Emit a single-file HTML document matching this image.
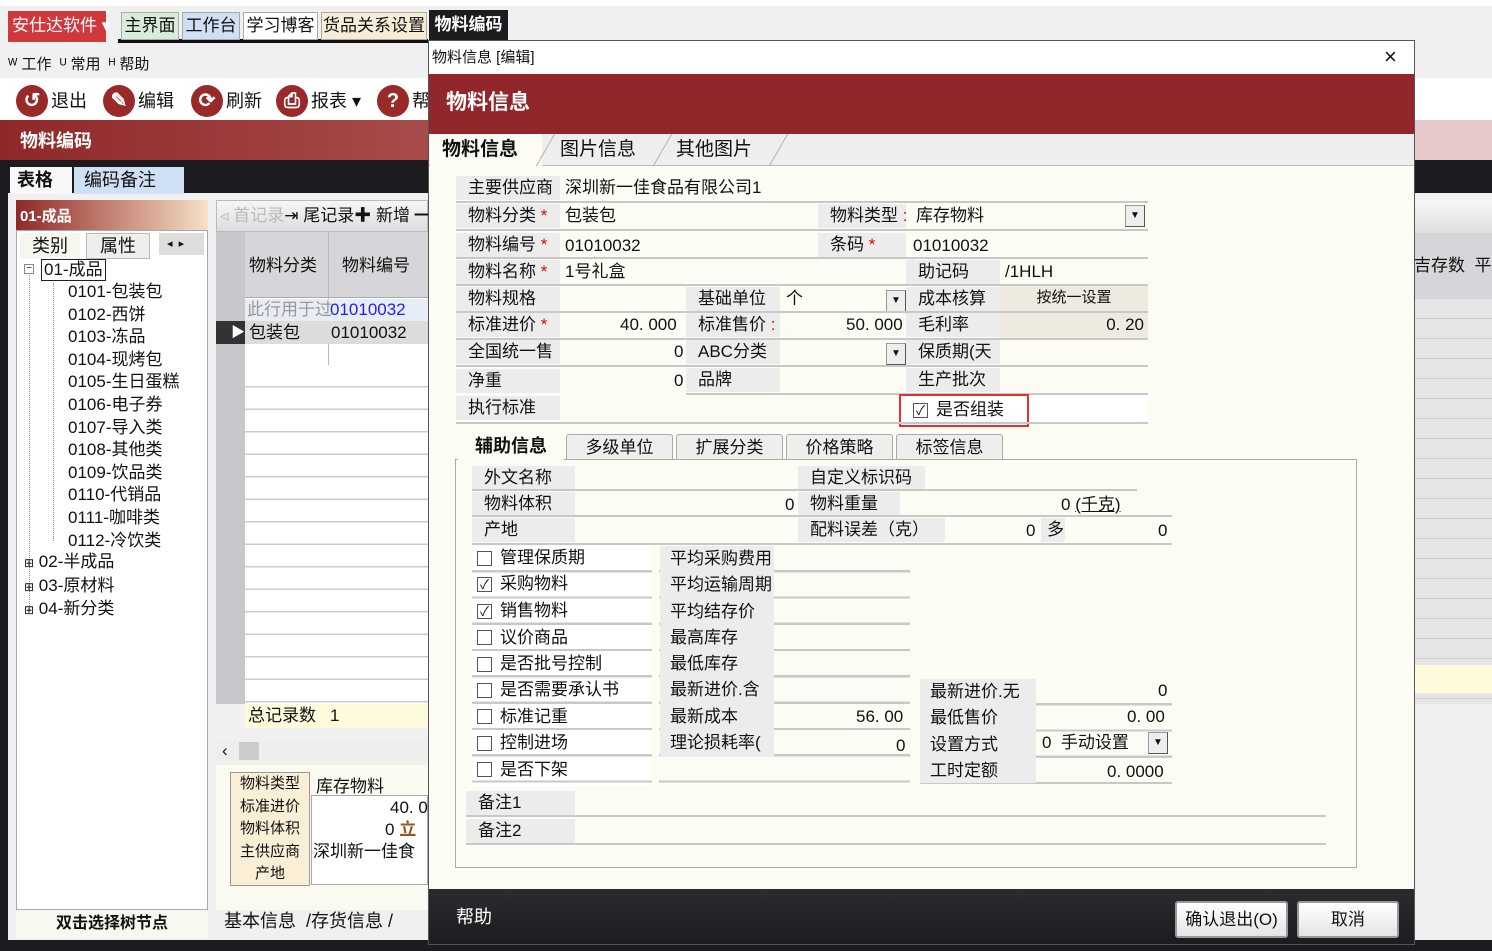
<!DOCTYPE html>
<html><head><meta charset="utf-8">
<style>
*{margin:0;padding:0;box-sizing:border-box}
body{width:1492px;height:951px;overflow:hidden;position:relative;background:#f0f0f0;font-family:"Liberation Sans","Noto Sans CJK SC",sans-serif;font-size:17px;color:#111}
div,span{position:absolute;white-space:nowrap}
.t{line-height:24px}
.lb{background:#ececec;line-height:24px;padding-left:12px}
.hl{height:2px;background:#c8c8c8}
.dd{width:20px;height:22px;background:#eee;border:1px solid #999;border-right-color:#555;border-bottom-color:#555;font-size:10px;text-align:center;line-height:20px}
.cb{width:15px;height:15px;border:1px solid #555;background:#fff;font-size:13px;line-height:13px;text-align:center}
.r{color:#e00}
.ic{width:32px;height:32px;border-radius:50%;background:#9a2a2a;color:#fff;text-align:center;line-height:32px;font-size:20px;font-weight:bold}
.tab{height:34px;border:1px solid #aaa;border-bottom:none;background:#eee;line-height:32px;text-align:center;font-size:17px;border-radius:3px 3px 0 0}
</style></head><body>
<!-- top bar -->
<div style="left:0;top:0;width:1492px;height:6px;background:#fff"></div>
<div style="left:8px;top:11px;width:98px;height:31px;background:#d0393c;color:#fff;line-height:30px;padding-left:4px;font-size:17px">安仕达软件 ▾</div>
<div style="left:118px;top:39px;width:310px;height:4px;background:#111"></div>
<div style="left:121px;top:12px;width:58px;height:28px;background:#d9ecdc;border:1px solid #aaa;text-align:center;line-height:26px">主界面</div>
<div style="left:182px;top:12px;width:58px;height:28px;background:#cfe0f4;border:1px solid #aaa;text-align:center;line-height:26px">工作台</div>
<div style="left:243px;top:12px;width:75px;height:28px;background:#fff;border:1px solid #aaa;text-align:center;line-height:26px">学习博客</div>
<div style="left:321px;top:12px;width:106px;height:28px;background:#f7ecd6;border:1px solid #aaa;text-align:center;line-height:26px">货品关系设置</div>
<div style="left:429px;top:10px;width:79px;height:32px;background:#1c1c20;color:#fff;text-align:center;line-height:30px;font-weight:bold">物料编码</div>
<div class="t" style="left:8px;top:53px;font-size:15px">ᵂ 工作 &nbsp;ᵁ 常用 &nbsp;ᴴ 帮助</div>
<div style="left:0;top:78px;width:1492px;height:42px;background:#fff"></div>
<div class="ic" style="left:16px;top:85px">↺</div><div class="t" style="left:51px;top:89px;font-size:18px">退出</div>
<div class="ic" style="left:103px;top:85px">✎</div><div class="t" style="left:138px;top:89px;font-size:18px">编辑</div>
<div class="ic" style="left:191px;top:85px">⟳</div><div class="t" style="left:226px;top:89px;font-size:18px">刷新</div>
<div class="ic" style="left:276px;top:85px">⎙</div><div class="t" style="left:311px;top:89px;font-size:18px">报表 ▾</div>
<div class="ic" style="left:377px;top:85px">?</div><div class="t" style="left:412px;top:89px;font-size:18px">帮</div>
<div style="left:0;top:120px;width:1492px;height:40px;background:linear-gradient(90deg,#8f2828,#b05a5a 40%,#e4c6c8 80%,#e6c8ca)"></div>
<div class="t" style="left:20px;top:129px;color:#fff;font-weight:bold;font-size:18px">物料编码</div>
<div style="left:0;top:160px;width:1492px;height:33px;background:#1c1c20"></div>
<div style="left:10px;top:167px;width:62px;height:27px;background:#f8f8f8;font-weight:bold;line-height:26px;padding-left:7px;font-size:18px">表格</div>
<div style="left:74px;top:167px;width:110px;height:27px;background:#cfe0f4;line-height:26px;padding-left:10px;font-size:18px">编码备注</div>
<div style="left:0;top:193px;width:8px;height:758px;background:#1c1c20"></div>
<div style="left:0;top:940px;width:1492px;height:11px;background:#1c1c20"></div>
<!-- left panel -->
<div style="left:16px;top:200px;width:192px;height:30px;background:linear-gradient(90deg,#8f2828,#d9a894 70%,#f5e2c8);color:#fff;font-weight:bold;font-size:15px;line-height:34px;padding-left:4px">01-成品</div>
<div style="left:16px;top:230px;width:192px;height:680px;background:#fff;border:1px solid #aaa"></div>
<div style="left:20px;top:233px;width:60px;height:26px;background:#f6f6ee;text-align:center;line-height:26px;font-size:18px">类别</div>
<div style="left:86px;top:233px;width:64px;height:26px;background:#eee;border:1px solid #bbb;text-align:center;line-height:24px;font-size:18px">属性</div>
<div style="left:159px;top:233px;width:45px;height:22px;background:#ddd;font-size:11px;line-height:22px;padding-left:8px">◂ &nbsp;▸</div>
<div style="left:24px;top:264px;width:10px;height:10px;border:1px solid #888;font-size:10px;line-height:8px;text-align:center">−</div>
<div class="t" style="left:41px;top:259px;border:1px solid #222;padding:0 2px;line-height:20px">01-成品</div>
<div style="left:29px;top:275px;height:335px;border-left:1px dotted #999"></div>
<div style="left:53px;top:283px;height:258px;border-left:1px dotted #999"></div>
<div class="t" style="left:68px;top:281px;line-height:22.6px">0101-包装包<br>0102-西饼<br>0103-冻品<br>0104-现烤包<br>0105-生日蛋糕<br>0106-电子券<br>0107-导入类<br>0108-其他类<br>0109-饮品类<br>0110-代销品<br>0111-咖啡类<br>0112-冷饮类</div>
<div class="t" style="left:24px;top:551px;line-height:22.6px"><span style="position:static;font-size:12px">⊞</span> 02-半成品<br><span style="position:static;font-size:12px">⊞</span> 03-原材料<br><span style="position:static;font-size:12px">⊞</span> 04-新分类</div>
<div style="left:16px;top:910px;width:192px;height:28px;background:#f8f8f0;text-align:center;font-weight:bold;font-size:16px;line-height:28px">双击选择树节点</div>
<!-- grid -->
<div style="left:216px;top:200px;width:212px;height:32px;background:linear-gradient(#f6f6f6,#ddd);border:1px solid #bbb"></div>
<div class="t" style="left:220px;top:204px"><span style="position:static;color:#bbb">◃ 首记录</span>⇥ 尾记录✚ 新增 ━</div>
<div style="left:216px;top:232px;width:212px;height:472px;background:#fff"></div>
<div style="left:216px;top:232px;width:29px;height:472px;background:#c8c8cc"></div>
<div style="left:245px;top:232px;width:183px;height:66px;background:#d6d6da;border-bottom:1px solid #aaa"></div>
<div style="left:328px;top:232px;width:1px;height:472px;background:#bbb"></div>
<div class="t" style="left:249px;top:254px">物料分类</div><div class="t" style="left:342px;top:254px">物料编号</div>
<div style="left:245px;top:299px;width:183px;height:22px;background:#e8ecf4"></div>
<div class="t" style="left:247px;top:298px;color:#999">此行用于过</div><div class="t" style="left:330px;top:298px;color:#22e">01010032</div>
<div style="left:216px;top:321px;width:29px;height:23px;background:#333;color:#fff;font-size:14px;line-height:23px;padding-left:15px">▶</div>
<div style="left:245px;top:321px;width:183px;height:23px;background:#dcdcdc"></div>
<div class="t" style="left:249px;top:321px">包装包</div><div class="t" style="left:331px;top:321px">01010032</div>
<div style="left:245px;top:365px;width:183px;height:340px;background:repeating-linear-gradient(#fff 0 21px,#ccc 21px 22.5px)"></div>
<div style="left:245px;top:704px;width:183px;height:24px;background:#fdfbdc"></div>
<div class="t" style="left:248px;top:704px">总记录数</div><div class="t" style="left:330px;top:704px">1</div>
<div style="left:216px;top:740px;width:212px;height:22px;background:#eee;padding-left:6px;line-height:22px">‹</div>
<div style="left:239px;top:742px;width:20px;height:18px;background:#ccc"></div>
<div style="left:216px;top:765px;width:212px;height:145px;background:#fafaf0"></div>
<div style="left:230px;top:772px;width:80px;height:114px;background:#fbeed6;border:1px solid #999;font-size:15px;line-height:22.6px;text-align:center;white-space:normal">物料类型 标准进价 物料体积 主供应商 产地</div>
<div class="t" style="left:316px;top:775px">库存物料</div>
<div style="left:311px;top:795px;width:117px;height:90px;background:#fff;border:1px solid #aaa"></div>
<div class="t" style="left:390px;top:796px">40. 0</div><div class="t" style="left:385px;top:818px">0 <b style="position:static;color:#952">立</b></div>
<div class="t" style="left:313px;top:840px">深圳新一佳食</div>
<div class="t" style="left:224px;top:909px;font-size:18px">基本信息 &nbsp;/存货信息 /</div>
<!-- right background -->
<div style="left:1414px;top:200px;width:78px;height:35px;background:linear-gradient(#f6f6f6,#ddd)"></div>
<div style="left:1414px;top:233px;width:78px;height:66px;background:#d6d6da"></div>
<div class="t" style="left:1414px;top:254px">吉存数 &nbsp;平</div>
<div style="left:1414px;top:299px;width:78px;height:405px;background:repeating-linear-gradient(#e6e6e6 0 19px,#ccc 19px 20px)"></div>
<div style="left:1414px;top:665px;width:78px;height:28px;background:#fdfbdc"></div>
<!-- dialog -->
<div style="left:428px;top:40px;width:987px;height:905px;background:#fcfcf4;border:1px solid #555"></div>
<div style="left:429px;top:41px;width:985px;height:33px;background:#fff"></div>
<div class="t" style="left:432px;top:46px;font-size:15px">物料信息 [编辑]</div>
<div class="t" style="left:1384px;top:45px;font-size:22px">×</div>
<div style="left:429px;top:74px;width:985px;height:60px;background:#91272a"></div>
<div class="t" style="left:446px;top:91px;color:#fff;font-weight:bold;font-size:21px">物料信息</div>
<div style="left:429px;top:134px;width:985px;height:32px;background:#eee;border-bottom:1px solid #bbb"></div>
<div style="left:430px;top:134px;width:112px;height:33px;background:#fcfcf4;font-weight:bold;font-size:19px;line-height:32px;padding-left:12px">物料信息</div>
<div class="t" style="left:560px;top:138px;font-size:19px">图片信息</div>
<div class="t" style="left:676px;top:138px;font-size:19px">其他图片</div>
<div style="left:545px;top:134px;width:1px;height:32px;background:#aaa;transform:skewX(-30deg)"></div>
<div style="left:662px;top:134px;width:1px;height:32px;background:#aaa;transform:skewX(-30deg)"></div>
<div style="left:778px;top:134px;width:1px;height:32px;background:#aaa;transform:skewX(-30deg)"></div>

<!-- main form rows -->
<div class="lb" style="left:456px;top:176px;width:104px">主要供应商</div><div class="t" style="left:565px;top:176px">深圳新一佳食品有限公司1</div>
<div class="hl" style="left:456px;top:201px;width:692px"></div>
<div class="lb" style="left:456px;top:204px;width:104px">物料分类 <span class="r" style="position:static">*</span></div><div class="t" style="left:565px;top:204px">包装包</div>
<div class="lb" style="left:818px;top:204px;width:88px">物料类型 <span class="r" style="position:static">:</span></div><div class="t" style="left:916px;top:204px">库存物料</div>
<div class="dd" style="left:1125px;top:205px">▼</div>
<div class="hl" style="left:456px;top:229px;width:692px"></div>
<div class="lb" style="left:456px;top:233px;width:104px">物料编号 <span class="r" style="position:static">*</span></div><div class="t" style="left:565px;top:234px">01010032</div>
<div class="lb" style="left:818px;top:233px;width:88px">条码 <span class="r" style="position:static">*</span></div><div class="t" style="left:913px;top:234px">01010032</div>
<div class="hl" style="left:456px;top:257px;width:692px"></div>
<div class="lb" style="left:456px;top:260px;width:104px">物料名称 <span class="r" style="position:static">*</span></div><div class="t" style="left:565px;top:260px">1号礼盒</div>
<div class="lb" style="left:906px;top:260px;width:94px">助记码</div><div class="t" style="left:1005px;top:260px">/1HLH</div>
<div class="hl" style="left:456px;top:284px;width:692px"></div>
<div class="lb" style="left:456px;top:287px;width:104px">物料规格</div>
<div class="lb" style="left:686px;top:287px;width:94px">基础单位</div><div class="t" style="left:786px;top:287px">个</div><div class="dd" style="left:886px;top:290px">▼</div>
<div class="lb" style="left:906px;top:287px;width:94px">成本核算</div>
<div style="left:1000px;top:286px;width:148px;height:25px;background:#eeeadf;text-align:center;line-height:24px;font-size:15px">按统一设置</div>
<div class="hl" style="left:456px;top:311px;width:692px"></div>
<div class="lb" style="left:456px;top:313px;width:104px">标准进价 <span class="r" style="position:static">*</span></div><div class="t" style="left:620px;top:313px">40. 000</div>
<div class="lb" style="left:686px;top:313px;width:94px">标准售价 <span class="r" style="position:static">:</span></div><div class="t" style="left:846px;top:313px">50. 000</div>
<div class="lb" style="left:906px;top:313px;width:94px">毛利率</div>
<div style="left:1000px;top:313px;width:148px;height:25px;background:#eeeadf;text-align:right;line-height:24px;padding-right:4px">0. 20</div>
<div class="hl" style="left:456px;top:338px;width:692px"></div>
<div class="lb" style="left:456px;top:340px;width:104px">全国统一售</div><div class="t" style="left:674px;top:340px">0</div>
<div class="lb" style="left:686px;top:340px;width:94px">ABC分类</div><div class="dd" style="left:886px;top:343px">▼</div>
<div class="lb" style="left:906px;top:340px;width:94px">保质期(天</div>
<div class="hl" style="left:456px;top:365px;width:692px"></div>
<div class="lb" style="left:456px;top:369px;width:104px">净重</div><div class="t" style="left:674px;top:369px">0</div>
<div class="lb" style="left:686px;top:368px;width:94px">品牌</div>
<div class="lb" style="left:906px;top:368px;width:94px">生产批次</div>
<div class="hl" style="left:686px;top:393px;width:462px"></div>
<div class="lb" style="left:456px;top:396px;width:104px">执行标准</div>
<div style="left:900px;top:395px;width:248px;height:28px;background:#fff"></div>
<div style="left:899px;top:394px;width:130px;height:33px;border:2px solid #e53030"></div>
<div class="cb" style="left:913px;top:403px">✓</div><div class="t" style="left:936px;top:398px">是否组装</div>
<div class="hl" style="left:456px;top:422px;width:692px"></div>

<!-- sub tabs -->
<div style="left:455px;top:459px;width:902px;height:409px;border:1px solid #aaa"></div>
<div class="tab" style="left:458px;top:432px;width:106px;background:#fcfcf4;font-weight:bold;font-size:18px;height:28px;line-height:28px;border:none">辅助信息</div>
<div class="tab" style="left:566px;top:434px;width:107px;height:25px;line-height:25px">多级单位</div>
<div class="tab" style="left:676px;top:434px;width:107px;height:25px;line-height:25px">扩展分类</div>
<div class="tab" style="left:786px;top:434px;width:107px;height:25px;line-height:25px">价格策略</div>
<div class="tab" style="left:896px;top:434px;width:107px;height:25px;line-height:25px">标签信息</div>

<div class="lb" style="left:472px;top:466px;width:103px">外文名称</div>
<div class="lb" style="left:798px;top:466px;width:127px">自定义标识码</div>
<div class="hl" style="left:472px;top:489px;width:665px"></div>
<div class="lb" style="left:472px;top:492px;width:103px">物料体积</div><div class="t" style="left:785px;top:493px">0</div>
<div class="lb" style="left:798px;top:492px;width:102px">物料重量</div><div class="t" style="left:1061px;top:493px">0 <u style="position:static">(千克)</u></div>
<div class="hl" style="left:472px;top:515px;width:700px"></div>
<div class="lb" style="left:472px;top:518px;width:103px">产地</div>
<div class="lb" style="left:798px;top:518px;width:147px;background:#ececec">配料误差（克）</div><div class="t" style="left:1026px;top:519px">0</div>
<div class="lb" style="left:1041px;top:518px;width:24px;padding-left:6px">多</div><div class="t" style="left:1158px;top:519px">0</div>
<div class="hl" style="left:472px;top:543px;width:700px"></div>

<div style="left:472px;top:546px;width:180px;height:240px;background:repeating-linear-gradient(#fff 0 24px,#c8c8c8 24px 26.3px)"></div>
<div class="cb" style="left:477px;top:551px"></div><div class="t" style="left:500px;top:546px">管理保质期</div>
<div class="cb" style="left:477px;top:577px">✓</div><div class="t" style="left:500px;top:572px">采购物料</div>
<div class="cb" style="left:477px;top:604px">✓</div><div class="t" style="left:500px;top:599px">销售物料</div>
<div class="cb" style="left:477px;top:630px"></div><div class="t" style="left:500px;top:626px">议价商品</div>
<div class="cb" style="left:477px;top:657px"></div><div class="t" style="left:500px;top:652px">是否批号控制</div>
<div class="cb" style="left:477px;top:683px"></div><div class="t" style="left:500px;top:678px">是否需要承认书</div>
<div class="cb" style="left:477px;top:709px"></div><div class="t" style="left:500px;top:705px">标准记重</div>
<div class="cb" style="left:477px;top:736px"></div><div class="t" style="left:500px;top:731px">控制进场</div>
<div class="cb" style="left:477px;top:762px"></div><div class="t" style="left:500px;top:758px">是否下架</div>

<div style="left:659px;top:546px;width:251px;height:240px;background:repeating-linear-gradient(transparent 0 24px,#c8c8c8 24px 26.3px)"></div>
<div class="lb" style="left:660px;top:546px;width:114px;line-height:24px;padding-left:10px;height:211px;white-space:pre;line-height:26.3px;background:#ececec">平均采购费用
平均运输周期
平均结存价
最高库存
最低库存
最新进价.含
最新成本
理论损耗率(</div>
<div class="t" style="left:856px;top:705px">56. 00</div>
<div class="t" style="left:896px;top:734px">0</div>

<div style="left:920px;top:679px;width:252px;height:106px;background:repeating-linear-gradient(transparent 0 24px,#c8c8c8 24px 26.3px)"></div>
<div class="lb" style="left:920px;top:679px;width:116px;height:104px;white-space:pre;line-height:26.3px;padding-left:10px">最新进价.无
最低售价
设置方式
工时定额</div>
<div class="t" style="left:1158px;top:679px">0</div>
<div class="t" style="left:1127px;top:705px">0. 00</div>
<div class="t" style="left:1042px;top:731px">0 &nbsp;手动设置</div><div class="dd" style="left:1148px;top:732px">▼</div>
<div class="t" style="left:1107px;top:760px">0. 0000</div>

<div class="lb" style="left:466px;top:791px;width:109px">备注1</div>
<div class="hl" style="left:466px;top:815px;width:860px"></div>
<div class="lb" style="left:466px;top:819px;width:109px">备注2</div>
<div class="hl" style="left:466px;top:843px;width:860px"></div>

<!-- footer -->
<div style="left:429px;top:889px;width:985px;height:55px;background:linear-gradient(#2c2c30,#1c1c20)"></div>
<div class="t" style="left:456px;top:905px;color:#fff;font-size:18px">帮助</div>
<div style="left:1175px;top:901px;width:113px;height:37px;background:linear-gradient(#fff,#e4e4e4);border:2px solid #999;border-radius:3px;text-align:center;line-height:33px">确认退出(O)</div>
<div style="left:1297px;top:901px;width:102px;height:37px;background:linear-gradient(#fff,#e4e4e4);border:2px solid #999;border-radius:3px;text-align:center;line-height:33px">取消</div>
</body></html>
